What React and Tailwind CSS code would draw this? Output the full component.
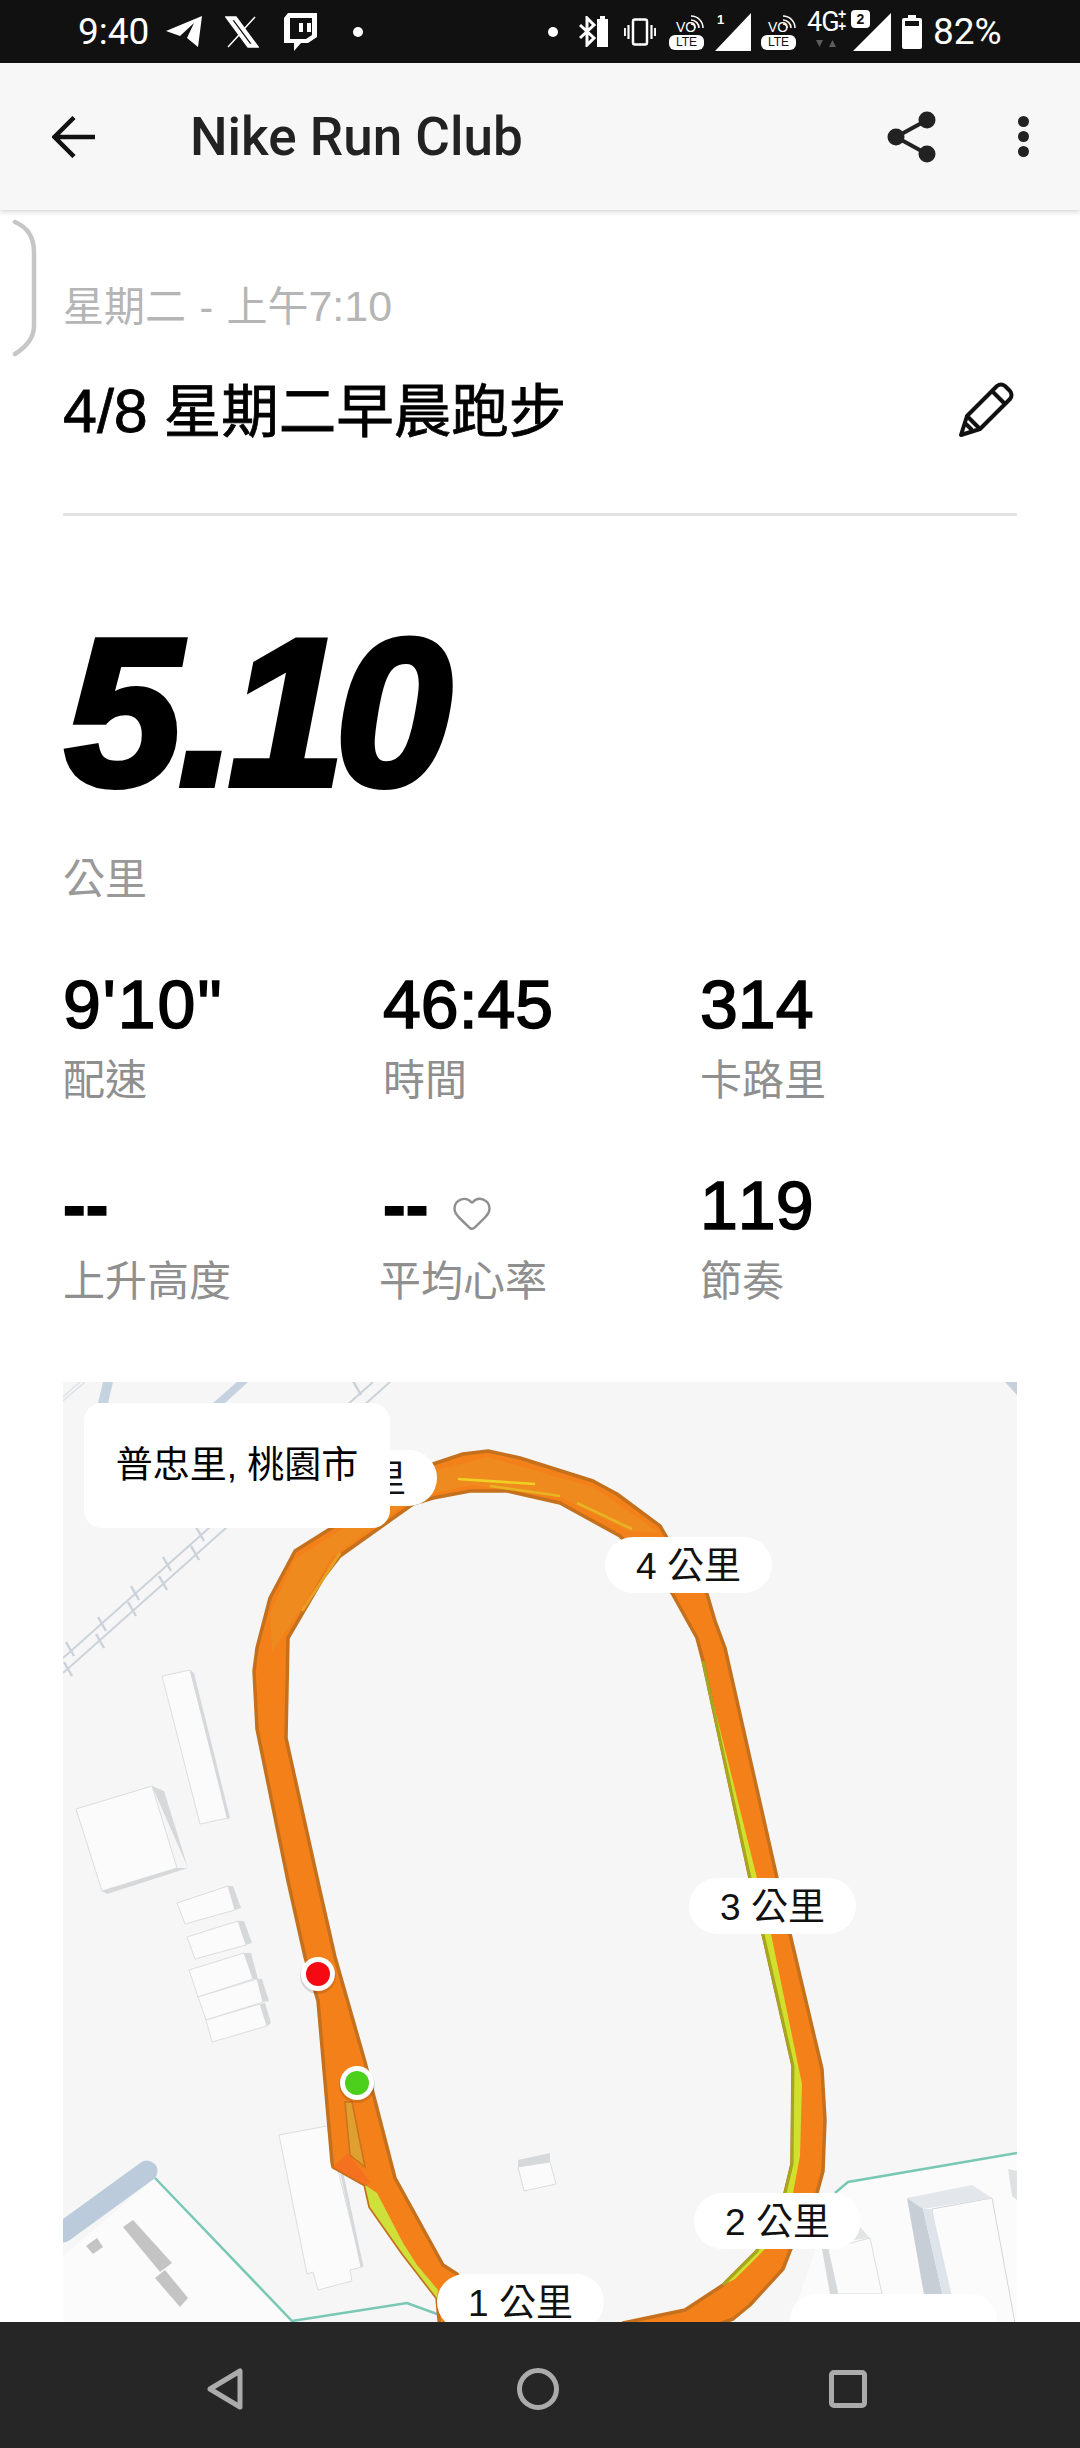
import { Heart } from 'lucide-react'

const font = { fontFamily: '"Liberation Sans", "Noto Sans CJK TC", sans-serif' }

const stats = [
  { value: `9'10"`, label: '配速', wide: true },
  { value: '46:45', label: '時間' },
  { value: '314', label: '卡路里' },
  { value: '--', label: '上升高度' },
  { value: '--', label: '平均心率', heart: true },
  { value: '119', label: '節奏' },
]

// buildings on the map: [roof, side]
const buildings = [
  ['162,1675 190,1669 228,1817 200,1823', '190,1669 194,1672 230,1817 227,1818'],
  ['76,1808 152,1785 177,1867 102,1890', '152,1785 164,1790 188,1867 177,1867 102,1890 107,1893 188,1867'],
  ['177,1902 228,1885 235,1909 185,1923', '228,1885 233,1885 241,1907 235,1909'],
  ['187,1936 238,1920 246,1944 195,1958', '238,1920 244,1920 252,1942 246,1944'],
  ['189,1969 244,1952 253,1978 198,1996', '244,1952 251,1952 258,1978 253,1978'],
  ['198,1996 257,1978 263,2001 206,2019', '257,1978 262,1978 269,2000 263,2001'],
  ['206,2019 260,2003 267,2025 212,2041', '260,2003 265,2002 271,2022 267,2025'],
  ['518,2166 550,2161 556,2183 524,2190', '518,2159 550,2152 550,2161 518,2166'],
  ['828,2248 870,2237 882,2293 838,2293', '822,2248 828,2248 838,2293 830,2293'],
]

const ties = [
  [70, 1648], [102, 1623], [135, 1592], [167, 1563], [200, 1533], [357, 1387],
  [68, 1668], [100, 1640], [132, 1608], [163, 1582], [195, 1552],
]

const route =
  'M440,2330 L437,2297 L403,2253 L370,2206 L365,2184 L333,2166 L332,2161 L318,2000 L305,1956 L288,1880 L257,1728 L254,1670 L257,1647 L270,1597 L295,1550 L433,1463 L463,1453 L488,1450 L520,1457 L593,1480 L617,1493 L660,1525 L667,1537 L707,1593 L715,1620 L725,1647 L777,1877 L790,1933 L822,2068 L825,2119 L823,2170 L817,2192 L790,2250 L783,2268 L750,2304 L733,2318 L700,2330 L623,2330 L623,2322 L685,2309 L723,2284 L757,2250 L785,2192 L792,2163 L793,2065 L763,1933 L750,1877 L703,1660 L697,1637 L672,1592 L620,1535 L560,1502 L507,1490 L470,1490 L433,1497 L413,1503 L340,1555 L323,1577 L288,1637 L286,1737 L320,1890 L335,1956 L365,2061 L395,2177 L443,2264 L457,2273 L490,2330 Z'

function MapDrawing() {
  return (
    <svg viewBox="63 1381 954 941" className="absolute inset-0 w-full h-full">
      <rect x="63" y="1381" width="954" height="941" fill="#f6f6f7" />
      {/* roads */}
      <polygon points="98,1402 103,1381 113,1381 108,1402" fill="#c5d2df" />
      <polygon points="213,1402 237,1381 248,1381 225,1402" fill="#c5d2df" />
      <polygon points="1005,1381 1017,1381 1017,1394" fill="#c5d0dc" />
      <path d="M63,1400 L85,1381 M63,1396 L80,1381" stroke="#dfe2e6" strokeWidth="1.5" />
      {/* rail */}
      <path d="M63,1657 L373,1381 M63,1672 L390,1381" stroke="#ccd2da" strokeWidth="2" fill="none" />
      {ties.map(([x, y]) => (
        <path key={`${x}-${y}`} d={`M${x - 4},${y - 7} L${x + 4},${y + 7}`} stroke="#ccd2da" strokeWidth="2.5" />
      ))}
      {/* blocks lower left */}
      <polygon points="63,2255 155,2177 292,2322 63,2322" fill="#fbfbfc" />
      <path d="M63,2231 L147,2170" stroke="#bccbdb" strokeWidth="21" strokeLinecap="round" />
      <path d="M155,2177 L292,2320 L407,2302 L437,2313" stroke="#79c8b4" strokeWidth="2.5" fill="none" />
      <polygon points="123,2226 133,2219 172,2262 160,2271" fill="#c4c4c4" />
      <polygon points="155,2277 165,2269 188,2297 180,2306" fill="#c4c4c4" />
      <polygon points="86,2245 97,2237 103,2246 93,2253" fill="#c4c4c4" />
      {/* blocks lower right */}
      <polygon points="835,2192 848,2181 1017,2152 1017,2322 790,2322" fill="#fbfbfc" />
      <path d="M835,2192 L848,2181 L1017,2152" stroke="#79c8b4" strokeWidth="2.5" fill="none" />
      <polygon points="1008,2168 1017,2170 1017,2199 1012,2195" fill="#e0e1e3" />
      <polygon points="932,2208 992,2197 1015,2322 948,2322" fill="#fbfbfc" stroke="#d3d5d8" strokeWidth="1" />
      <polygon points="907,2197 972,2184 992,2197 923,2208" fill="#e3e6ea" />
      <polygon points="907,2197 923,2208 949,2322 929,2322" fill="#c8ced6" />
      <polygon points="923,2208 932,2208 958,2322 949,2322" fill="#dfe4ea" />
      <polygon points="853,2239 860,2226 870,2237" fill="#e3e4e6" />
      {buildings.map(([roof, side]) => (
        <g key={roof}>
          <polygon points={roof} fill="#fbfbfc" stroke="#dcdde0" strokeWidth="1" />
          <polygon points={side} fill="#d6d8da" />
        </g>
      ))}
      <polygon points="279,2134 327,2125 362,2266 350,2269 352,2280 318,2289 313,2271 307,2273" fill="#fbfbfc" stroke="#dcdde0" strokeWidth="1" />
      <path d="M342,2173 L362,2266" stroke="#d6d8da" strokeWidth="3" />
      {/* route */}
      <path d={route} fill="#f4801a" stroke="#c4701c" strokeWidth="3.5" strokeLinejoin="round" />
      <polygon points="295,1558 433,1470 488,1456 593,1486 660,1532 628,1530 560,1496 470,1484 413,1497 332,1556 300,1610 272,1650 270,1612" fill="#ee8a1e" />
      <polygon points="703,1660 757,1877 771,1933 802,2083 800,2155 793,2192 765,2248 735,2278 723,2284 757,2250 785,2192 792,2163 793,2065 763,1933 750,1877" fill="#d3df2d" />
      <path d="M703,1660 L750,1877 L763,1933 L793,2065 L792,2163 L785,2192 L757,2250 L723,2284" stroke="#a5a81f" strokeWidth="3" fill="none" />
      <polygon points="365,2184 370,2206 403,2253 437,2297 438,2289 417,2264 403,2242 377,2192" fill="#cfe03a" />
      <polygon points="345,2101 352,2101 365,2166 350,2154" fill="#dfa02f" stroke="#c9731c" strokeWidth="1.5" />
      <polygon points="333,2166 348,2152 370,2181 365,2184" fill="#f5701f" />
      <path d="M458,1478 L535,1483" stroke="#efd124" strokeWidth="2.5" />
      <path d="M490,1485 L560,1495 M577,1502 L632,1528" stroke="#e8b423" strokeWidth="2.5" />
      <path d="M302,1610 L340,1552" stroke="#e8a024" strokeWidth="3" />
      {/* start and finish */}
      <circle cx="318" cy="1975" r="18" fill="#000" opacity="0.12" />
      <circle cx="318" cy="1973" r="17" fill="#fff" />
      <circle cx="318" cy="1973" r="12" fill="#f50a14" />
      <circle cx="357" cy="2084" r="18" fill="#000" opacity="0.12" />
      <circle cx="357" cy="2082" r="17" fill="#fff" />
      <circle cx="357" cy="2082" r="12" fill="#4cd01c" />
    </svg>
  )
}

function Pill({ className, children }) {
  return (
    <div className={`absolute h-[56px] w-[167px] pt-[3px] bg-white rounded-full flex items-center justify-center text-[37px] text-[#111] ${className}`}>
      {children}
    </div>
  )
}

function Volte({ className }) {
  return (
    <div className={`relative w-[35px] h-[36px] ${className}`}>
      <span className="absolute left-[7px] top-[6px] text-[14px] leading-none" style={font}>VO</span>
      <svg width="14" height="16" viewBox="0 0 14 16" className="absolute left-[21px] top-0">
        <path d="M1 2 A12 12 0 0 1 13 14 M1 6 A8 8 0 0 1 9 14 M1 10 A4 4 0 0 1 5 14" stroke="#fff" strokeWidth="1.6" fill="none" />
      </svg>
      <span className="absolute left-0 bottom-0 w-[35px] h-[15px] bg-white rounded-[6px] text-[#111] text-[12px] leading-none flex items-center justify-center" style={font}>LTE</span>
    </div>
  )
}

function StatusBar() {
  return (
    <div className="h-[63px] bg-[#111111] text-white flex items-center shrink-0 pl-[78px] relative">
      <span className="text-[37px] leading-none" style={{ fontFamily: 'Roboto, sans-serif' }}>9:40</span>
      {/* telegram */}
      <svg width="36" height="32" viewBox="0 0 36 32" className="ml-[17px]">
        <path d="M0 15 L36 0 L32 31 L21 22 L28 7 L14 20 Z" fill="#fff" />
      </svg>
      {/* x */}
      <svg width="34" height="32" viewBox="0 0 34 32" className="ml-[23px]">
        <path d="M1 1 H11 L33 31 H23 Z M6 3.5 L24.5 28.5 H28 L9.5 3.5 Z M30 1 L19 13 M3 31 L14 19" fill="#fff" fillRule="evenodd" stroke="#fff" strokeWidth="1.5" />
      </svg>
      {/* twitch */}
      <svg width="33" height="38" viewBox="0 0 33 38" className="ml-[25px]">
        <path d="M4 0 H33 V24 L24 30 H17 L10 38 V30 H0 V5 Z" fill="#fff" />
        <path d="M6 5 H28 V22 L22 26 H8 L6 26 Z" fill="#111" />
        <path d="M15 10 H19 V19 H15 Z M23 10 H27 V19 H23 Z" fill="#fff" />
      </svg>
      <span className="ml-[36px] w-[10px] h-[10px] rounded-full bg-white" />

      <div className="absolute left-[548px] top-0 h-[63px] flex items-center">
        <span className="w-[10px] h-[10px] rounded-full bg-white" />
        {/* bluetooth + battery */}
        <svg width="29" height="31" viewBox="0 0 29 31" className="ml-[21px]">
          <path d="M1 9 L15 22 L8 29 V2 L15 9 L1 22" stroke="#fff" strokeWidth="3" fill="none" />
          <path d="M21 0 H26 V3 H29 V31 H18 V3 H21 Z" fill="#fff" />
        </svg>
        {/* vibrate */}
        <svg width="32" height="28" viewBox="0 0 32 28" className="ml-[16px]">
          <rect x="9" y="1.5" width="14" height="25" rx="2" stroke="#fff" strokeWidth="2.5" fill="none" />
          <path d="M4.5 7 V21 M0.8 10 V18 M27.5 7 V21 M31.2 10 V18" stroke="#fff" strokeWidth="2.2" />
        </svg>
        <Volte className="ml-[13px]" />
        {/* sim 1 */}
        <div className="relative ml-[11px] w-[36px] h-[38px]">
          <svg width="36" height="38" viewBox="0 0 36 38"><path d="M36 0 V38 H0 Z" fill="#fff" /></svg>
          <span className="absolute left-[2px] top-0 text-[13px] leading-none font-bold" style={font}>1</span>
        </div>
        <Volte className="ml-[10px]" />
        {/* 4G+ */}
        <div className="relative ml-[11px] w-[36px] h-[40px] -mt-[6px]">
          <span className="text-[27px] leading-none tracking-[-1px]" style={{ fontFamily: 'Roboto, sans-serif' }}>4G</span>
          <span className="absolute left-[31px] top-[-2px] text-[14px] leading-none font-bold" style={font}>+</span>
          <span className="absolute left-[31px] top-[10px] text-[14px] leading-none font-bold" style={font}>+</span>
          <svg width="20" height="7" viewBox="0 0 20 7" className="absolute left-[9px] top-[31px]">
            <path d="M0 0 H7 L3.5 7 Z M13 7 H20 L16.5 0 Z" fill="#5d5d5d" />
          </svg>
        </div>
        {/* sim 2 */}
        <div className="relative ml-[10px] w-[38px] h-[38px]">
          <svg width="38" height="38" viewBox="0 0 38 38"><path d="M38 0 V38 H0 Z" fill="#fff" /></svg>
          <span className="absolute left-[-4px] top-[-5px] w-[23px] h-[22px] rounded-[6px] bg-white border-2 border-[#111] text-[#111] flex items-center justify-center text-[14px] leading-none font-bold" style={font}>2</span>
        </div>
        {/* battery */}
        <svg width="20" height="34" viewBox="0 0 20 34" className="ml-[11px]">
          <path d="M6 0 H14 V3 H18 Q20 3 20 5 V32 Q20 34 18 34 H2 Q0 34 0 32 V5 Q0 3 2 3 H6 Z" fill="#fff" />
          <rect x="3" y="6" width="14" height="5" fill="#111" />
        </svg>
        <span className="ml-[11px] text-[37px] leading-none" style={{ fontFamily: 'Roboto, sans-serif' }}>82%</span>
      </div>
    </div>
  )
}

function AppBar() {
  return (
    <div className="h-[147px] bg-[#f7f7f7] flex items-center shrink-0 shadow-[0_2px_5px_rgba(0,0,0,0.16)] relative z-10">
      <svg width="44" height="42" viewBox="0 0 44 42" className="ml-[52px]">
        <path d="M43 21 H3 M22 1.5 L2.5 21 L22 40.5" stroke="#111" strokeWidth="4.5" fill="none" />
      </svg>
      <span className="ml-[94px] mt-[2px] flex-1 text-[53px] leading-none font-medium text-[#222]" style={{ fontFamily: 'Roboto, sans-serif' }}>
        Nike Run Club
      </span>
      <svg width="50" height="52" viewBox="0 0 50 52">
        <path d="M40 9 L9 26 L40 43" stroke="#222" strokeWidth="4" fill="none" />
        <circle cx="40" cy="9" r="8.5" fill="#222" />
        <circle cx="9" cy="26" r="8.5" fill="#222" />
        <circle cx="40" cy="43" r="8.5" fill="#222" />
      </svg>
      <div className="ml-[81px] mr-[51px] flex flex-col gap-[4px]">
        <span className="w-[11px] h-[11px] rounded-full bg-[#222]" />
        <span className="w-[11px] h-[11px] rounded-full bg-[#222]" />
        <span className="w-[11px] h-[11px] rounded-full bg-[#222]" />
      </div>
    </div>
  )
}

function NavBar() {
  return (
    <div className="h-[126px] bg-[#262626] shrink-0 relative z-10 flex items-center pt-[8px]">
      <svg width="38" height="42" viewBox="0 0 38 42" className="ml-[206px]">
        <path d="M34 3 V39 L4 21 Z" stroke="#ababab" strokeWidth="5" strokeLinejoin="round" fill="none" />
      </svg>
      <span className="ml-[273px] w-[42px] h-[42px] rounded-full border-[5px] border-[#ababab]" />
      <span className="ml-[270px] w-[38px] h-[38px] rounded-[5px] border-[5px] border-[#ababab]" />
    </div>
  )
}

export default function App() {
  return (
    <div className="w-[1080px] h-[2448px] flex flex-col bg-white overflow-hidden" style={font}>
      <StatusBar />
      <AppBar />

      <div className="flex-1 min-h-0 relative overflow-hidden px-[63px] pt-[71px]">
        {/* pull handle */}
        <svg width="40" height="140" viewBox="0 0 40 140" className="absolute left-0 top-[8px]">
          <path d="M15 4 Q34 12 34 34 V108 Q34 124 15 136" stroke="#c6c6c6" strokeWidth="4.5" strokeLinecap="round" fill="none" />
        </svg>

        <p className="text-[41px] leading-[50px] text-[#b5b5b5] [word-spacing:2px]">
          星期二 - 上午<span className="text-[43px]">7:10</span>
        </p>
        <div className="mt-[44px] h-[70px] flex items-center justify-between">
          <p className="text-[57.5px] leading-none text-black [-webkit-text-stroke:0.8px_black]">
            <span className="text-[61px]">4/8</span> 星期二早晨跑步
          </p>
          <svg width="56" height="56" viewBox="0 0 56 56" className="mr-[3px] -mt-[2px]">
            <path d="M3 53 L9 34 L39 4 Q43 1 47 4 L52 9 Q55 13 52 17 L22 47 Z M9 34 L22 47 M34 9 L47 22 M8 42 L14 48" stroke="#111" strokeWidth="4" strokeLinejoin="round" fill="none" />
          </svg>
        </div>
        <div className="mt-[67px] h-[3px] bg-[#e3e3e3]" />

        {/* distance */}
        <p className="mt-[102px] h-[192px] text-[210px] leading-[190px] font-bold italic text-black tracking-[-10px] [-webkit-text-stroke:6px_black] ml-[2px]">
          5<span className="ml-[6px] mr-[2px]">.</span>10
        </p>
        <p className="mt-[45px] text-[42px] leading-[50px] text-[#999999]">公里</p>

        <div className="mt-[65px] grid grid-cols-[320px_317px_1fr] gap-y-[65px]">
          {stats.map(s => (
            <div key={s.label}>
              <div className="h-[68px] flex items-center">
                <span className={`text-[68px] leading-none text-black [font-kerning:none] [-webkit-text-stroke:1.6px_black] ${s.value === '--' ? 'font-bold' : ''} ${s.wide ? 'tracking-[2px]' : ''}`}>{s.value}</span>
                {s.heart && <Heart size={42} strokeWidth={1.4} className="ml-[23px] mt-[16px] text-[#8f8f8f]" />}
              </div>
              <p className={`mt-[18px] text-[42px] leading-[50px] text-[#8f8f8f] ${s.heart ? '-ml-[4px]' : ''}`}>{s.label}</p>
            </div>
          ))}
        </div>

        {/* map */}
        <div className="mt-[75px] h-[941px] relative overflow-hidden">
          <MapDrawing />
          <Pill className="left-[207px] top-[68px]">5 公里</Pill>
          <Pill className="left-[542px] top-[155px]">4 公里</Pill>
          <Pill className="left-[626px] top-[496px]">3 公里</Pill>
          <Pill className="left-[631px] top-[811px]">2 公里</Pill>
          <Pill className="left-[374px] top-[892px]">1 公里</Pill>
          <div className="absolute left-[727px] top-[912px] w-[207px] h-[70px] bg-white rounded-[26px]" />
          <div className="absolute left-[21px] top-[21px] w-[306px] h-[125px] bg-white rounded-[18px] flex items-center justify-center text-[37px] text-black">
            普忠里, 桃園市
          </div>
        </div>
      </div>

      <NavBar />
    </div>
  )
}
